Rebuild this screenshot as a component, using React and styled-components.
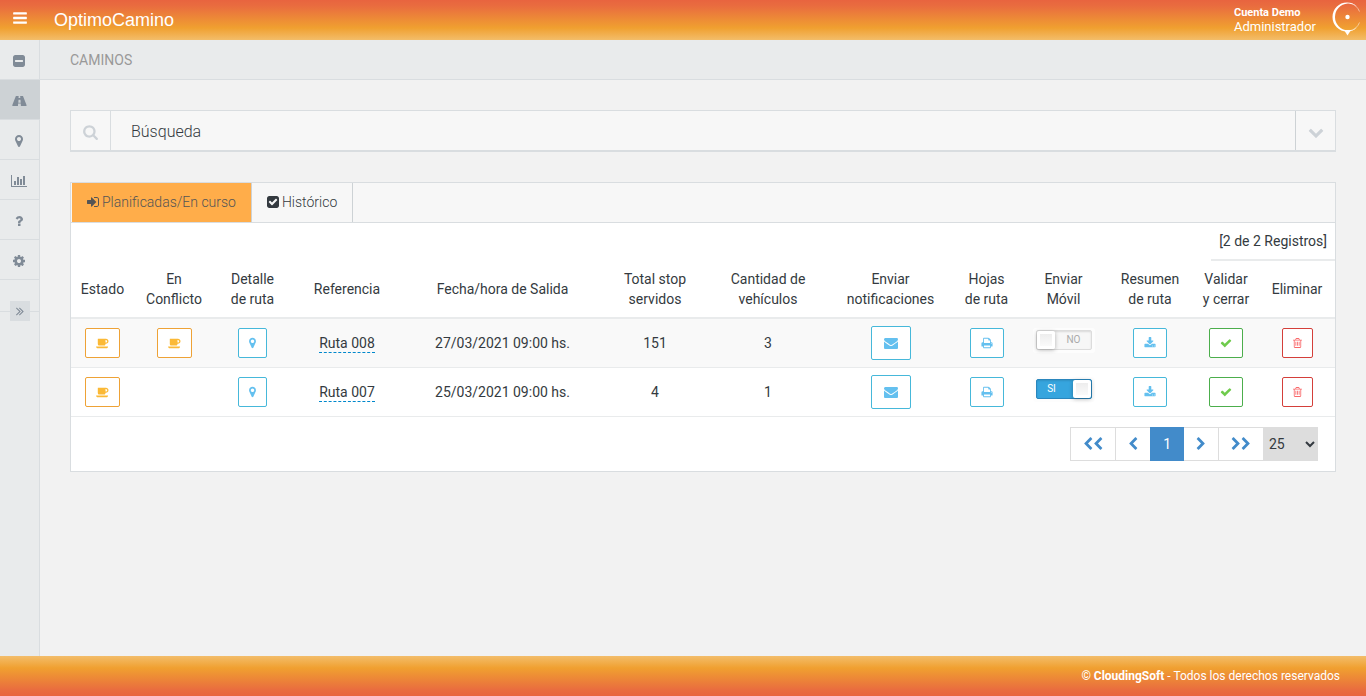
import React from 'react';
import styled, { createGlobalStyle, css } from 'styled-components';

const GlobalStyle = createGlobalStyle`
  *, *::before, *::after { box-sizing: border-box; }
  body {
    margin: 0;
    background: #f2f2f2;
    color: #343a40;
    font: 400 14px/20px Roboto, sans-serif;
  }
  button, select, input { font: inherit; color: inherit; }
  a { color: inherit; text-decoration: none; }
`;

/* Each glyph: [left edge, advance width, path] on a 1792-unit em. */
const GLYPHS = {
  bars: [128, 1536, 'M1664 1344v128q0 26-19 45t-45 19h-1408q-26 0-45-19t-19-45v-128q0-26 19-45t45-19h1408q26 0 45 19t19 45zm0-512v128q0 26-19 45t-45 19h-1408q-26 0-45-19t-19-45v-128q0-26 19-45t45-19h1408q26 0 45 19t19 45zm0-512v128q0 26-19 45t-45 19h-1408q-26 0-45-19t-19-45v-128q0-26 19-45t45-19h1408q26 0 45 19t19 45z'],
  minusSquare: [128, 1536, 'M1408 960v-128q0-26-19-45t-45-19h-896q-26 0-45 19t-19 45v128q0 26 19 45t45 19h896q26 0 45-19t19-45zm256-544v960q0 119-84.5 203.5t-203.5 84.5h-960q-119 0-203.5-84.5t-84.5-203.5v-960q0-119 84.5-203.5t203.5-84.5h960q119 0 203.5 84.5t84.5 203.5z'],
  road: [0, 1920, 'M1111 1086v-4l-24-320q-1-13-11-22.5t-23-9.5h-186q-13 0-23 9.5t-11 22.5l-24 320v4q-1 12 8 20t21 8h244q12 0 21-8t8-20zm749 377q0 73-46 73h-704q13 0 22-9.5t8-22.5l-20-256q-1-13-11-22.5t-23-9.5h-272q-13 0-23 9.5t-11 22.5l-20 256q-1 13 8 22.5t22 9.5h-704q-46 0-46-73 0-54 26-116l417-1044q8-19 26-33t38-14h339q-13 0-23 9.5t-11 22.5l-15 192q-1 14 8 23t22 9h166q13 0 22-9t8-23l-15-192q-1-13-11-22.5t-23-9.5h339q20 0 38 14t26 33l417 1044q26 62 26 116z'],
  marker: [384, 1024, 'M1152 640q0-106-75-181t-181-75-181 75-75 181 75 181 181 75 181-75 75-181zm256 0q0 109-33 179l-364 774q-16 33-47.5 52t-67.5 19-67.5-19-46.5-52l-365-774q-33-70-33-179 0-212 150-362t362-150 362 150 150 362z'],
  chart: [0, 2048, 'M640 896v512h-256v-512h256zm384-512v1024h-256v-1024h256zm1024 1152v128h-2048v-1536h128v1408h1920zm-640-896v768h-256v-768h256zm384-384v1152h-256v-1152h256z'],
  question: [384, 1024, 'M1088 1256v240q0 16-12 28t-28 12h-240q-16 0-28-12t-12-28v-240q0-16 12-28t28-12h240q16 0 28 12t12 28zm316-600q0 54-15.5 101t-35 76.5-55 59.5-57.5 43.5-61 35.5q-41 23-68.5 65t-27.5 67q0 17-12 32.5t-28 15.5h-240q-15 0-25.5-18.5t-10.5-37.5v-45q0-83 65-156.5t143-108.5q59-27 84-56t25-76q0-42-46.5-74t-107.5-32q-65 0-108 29-35 25-107 115-13 16-31 16-12 0-25-8l-164-125q-13-10-15.5-25t5.5-28q160-266 464-266 80 0 161 31t146 83 106 127.5 41 158.5z'],
  cog: [128, 1536, 'M1152 896q0-106-75-181t-181-75-181 75-75 181 75 181 181 75 181-75 75-181zm512-109v222q0 12-8 23t-20 13l-185 28q-19 54-39 91 35 50 107 138 10 12 10 25t-9 23q-27 37-99 108t-94 71q-12 0-26-9l-138-108q-44 23-91 38-16 136-29 186-7 28-36 28h-222q-14 0-24.5-8.5t-11.5-21.5l-28-184q-49-16-90-37l-141 107q-10 9-25 9-14 0-25-11-126-114-165-168-7-10-7-23 0-12 8-23 15-21 51-66.5t54-70.5q-27-50-41-99l-183-27q-13-2-21-12.5t-8-23.5v-222q0-12 8-23t19-13l186-28q14-46 39-92-40-57-107-138-10-12-10-24 0-10 9-23 26-36 98.5-107.5t94.5-71.5q13 0 26 10l138 107q44-23 91-38 16-136 29-186 7-28 36-28h222q14 0 24.5 8.5t11.5 21.5l28 184q49 16 90 37l142-107q9-9 24-9 13 0 25 10 129 119 165 170 7 8 7 22 0 12-8 23-15 21-51 66.5t-54 70.5q26 50 41 98l183 28q13 2 21 12.5t8 23.5z'],
  angles: [387, 1024, 'M979 960q0 13-10 23l-466 466q-10 10-23 10t-23-10l-50-50q-10-10-10-23t10-23l393-393-393-393q-10-10-10-23t10-23l50-50q10-10 23-10t23 10l466 466q10 10 10 23zm384 0q0 13-10 23l-466 466q-10 10-23 10t-23-10l-50-50q-10-10-10-23t10-23l393-393-393-393q-10-10-10-23t10-23l50-50q10-10 23-10t23 10l466 466q10 10 10 23z'],
  search: [64, 1664, 'M1216 832q0-185-131.5-316.5t-316.5-131.5-316.5 131.5-131.5 316.5 131.5 316.5 316.5 131.5 316.5-131.5 131.5-316.5zm512 832q0 52-38 90t-90 38q-54 0-90-38l-343-342q-179 124-399 124-143 0-273.5-55.5t-225-150-150-225-55.5-273.5 55.5-273.5 150-225 225-150 273.5-55.5 273.5 55.5 225 150 150 225 55.5 273.5q0 220-124 399l343 343q37 37 37 90z'],
  down: [0, 1792, 'M1683 808l-742 741q-19 19-45 19t-45-19l-742-741q-19-19-19-45.5t19-45.5l166-165q19-19 45-19t45 19l531 531 531-531q19-19 45-19t45 19l166 165q19 19 19 45.5t-19 45.5z'],
  left: [256, 1280, 'M1427 301l-531 531 531 531q19 19 19 45t-19 45l-166 166q-19 19-45 19t-45-19l-742-742q-19-19-19-45t19-45l742-742q19-19 45-19t45 19l166 166q19 19 19 45t-19 45z'],
  right: [256, 1280, 'M1363 877l-742 742q-19 19-45 19t-45-19l-166-166q-19-19-19-45t19-45l531-531-531-531q-19-19-19-45t19-45l166-166q19-19 45-19t45 19l742 742q19 19 19 45t-19 45z'],
  signIn: [128, 1536, 'M1312 896q0 26-19 45l-544 544q-19 19-45 19t-45-19-19-45v-288h-448q-26 0-45-19t-19-45v-384q0-26 19-45t45-19h448v-288q0-26 19-45t45-19 45 19l544 544q19 19 19 45zm352-352v704q0 119-84.5 203.5t-203.5 84.5h-320q-13 0-22.5-9.5t-9.5-22.5q0-4-1-20t-.5-26.5 3-23.5 10-19.5 20.5-6.5h320q66 0 113-47t47-113v-704q0-66-47-113t-113-47h-312l-11.5-1-11.5-3-8-5.5-7-9-2-13.5q0-4-1-20t-.5-26.5 3-23.5 10-19.5 20.5-6.5h320q119 0 203.5 84.5t84.5 203.5z'],
  checkSquare: [128, 1536, 'M813 1299l614-614q19-19 19-45t-19-45l-102-102q-19-19-45-19t-45 19l-467 467-211-211q-19-19-45-19t-45 19l-102 102q-19 19-19 45t19 45l358 358q19 19 45 19t45-19zm851-883v960q0 119-84.5 203.5t-203.5 84.5h-960q-119 0-203.5-84.5t-84.5-203.5v-960q0-119 84.5-203.5t203.5-84.5h960q119 0 203.5 84.5t84.5 203.5z'],
  coffee: [0, 1920, 'M1664 640q0-80-56-136t-136-56h-64v384h64q80 0 136-56t56-136zm-1664 768h1792q0 106-75 181t-181 75h-1280q-106 0-181-75t-75-181zm1856-768q0 159-112.5 271.5t-271.5 112.5h-64v32q0 92-66 158t-158 66h-704q-92 0-158-66t-66-158v-736q0-26 19-45t45-19h1152q159 0 271.5 112.5t112.5 271.5z'],
  envelope: [0, 1792, 'M1792 710v794q0 66-47 113t-113 47h-1472q-66 0-113-47t-47-113v-794q44 49 101 87 362 246 497 345 57 42 92.5 65.5t94.5 48 110 24.5h2q51 0 110-24.5t94.5-48 92.5-65.5q170-123 498-345 57-39 100-87zm0-294q0 79-49 151t-122 123q-376 261-468 325-10 7-42.5 31t-54 38.5-52 32.5-57.5 27-50 9h-2q-23 0-50-9t-57.5-27-52-32.5-54-38.5-42.5-31q-91-64-262-182.5t-205-142.5q-62-42-117-115.5t-55-136.5q0-78 41.5-130t118.5-52h1472q65 0 112.5 47t47.5 113z'],
  print: [32, 1728, 'M448 1536h896v-256h-896v256zm0-640h896v-384h-160q-40 0-68-28t-28-68v-160h-640v640zm1152 64q0-26-19-45t-45-19-45 19-19 45 19 45 45 19 45-19 19-45zm128 0v416q0 13-9.5 22.5t-22.5 9.5h-224v160q0 40-28 68t-68 28h-960q-40 0-68-28t-28-68v-160h-224q-13 0-22.5-9.5t-9.5-22.5v-416q0-79 56.5-135.5t135.5-56.5h64v-544q0-40 28-68t68-28h672q40 0 88 20t76 48l152 152q28 28 48 76t20 88v256h64q79 0 135.5 56.5t56.5 135.5z'],
  download: [32, 1728, 'M1344 1344q0-26-19-45t-45-19-45 19-19 45 19 45 45 19 45-19 19-45zm256 0q0-26-19-45t-45-19-45 19-19 45 19 45 45 19 45-19 19-45zm128-224v320q0 40-28 68t-68 28h-1472q-40 0-68-28t-28-68v-320q0-40 28-68t68-28h465l135 136q58 56 136 56t136-56l136-136h464q40 0 68 28t28 68zm-325-569q17 41-14 70l-448 448q-18 19-45 19t-45-19l-448-448q-31-29-14-70 17-39 59-39h256v-448q0-26 19-45t45-19h256q26 0 45 19t19 45v448h256q42 0 59 39z'],
  check: [32, 1728, 'M1671 566q0 40-28 68l-724 724-136 136q-28 28-68 28t-68-28l-136-136-362-362q-28-28-28-68t28-68l136-136q28-28 68-28t68 28l294 295 656-657q28-28 68-28t68 28l136 136q28 28 28 68z'],
  trash: [192, 1408, 'M704 736v576q0 14-9 23t-23 9h-64q-14 0-23-9t-9-23v-576q0-14 9-23t23-9h64q14 0 23 9t9 23zm256 0v576q0 14-9 23t-23 9h-64q-14 0-23-9t-9-23v-576q0-14 9-23t23-9h64q14 0 23 9t9 23zm256 0v576q0 14-9 23t-23 9h-64q-14 0-23-9t-9-23v-576q0-14 9-23t23-9h64q14 0 23 9t9 23zm128 724v-948h-896v948q0 22 7 40.5t14.5 27 10.5 8.5h832q3 0 10.5-8.5t14.5-27 7-40.5zm-672-1076h448l-48-117q-7-9-17-11h-317q-10 2-17 11zm928 32v64q0 14-9 23t-23 9h-96v948q0 83-47 143.5t-113 60.5h-832q-66 0-113-58.5t-47-141.5v-952h-96q-14 0-23-9t-9-23v-64q0-14 9-23t23-9h309l70-167q15-37 54-63t79-26h320q40 0 79 26t54 63l70 167h309q14 0 23 9t9 23z'],
};

const Glyph = styled.svg`
  display: block;
  flex: none;
  fill: currentColor;
`;

function Icon({ name, size = 14 }) {
  const [x, w, d] = GLYPHS[name];
  return (
    <Glyph
      viewBox={`${x} 0 ${w} 1792`}
      width={Math.round((w / 1792) * size)}
      height={size}
      aria-hidden="true"
    >
      <path d={d} />
    </Glyph>
  );
}

const Page = styled.div`
  display: flex;
  flex-direction: column;
  min-height: 100vh;
`;

const Header = styled.header`
  display: flex;
  align-items: center;
  height: 40px;
  color: #fff;
  background: linear-gradient(to bottom, #e8643f 0%, #e96c3f 15%, #f0a030 70%, #f3bd6a 100%);
`;

const MenuButton = styled.button`
  display: flex;
  align-items: center;
  justify-content: center;
  width: 40px;
  height: 40px;
  padding: 0 0 4px;
  border: 0;
  background: none;
`;

const Brand = styled.a`
  margin-left: 14px;
  font: 18px/20px "Liberation Sans", sans-serif;
`;

const Account = styled.div`
  margin-left: auto;
  margin-right: 14px;
  font-size: 13px;
  line-height: 14px;

  strong {
    display: block;
    font-size: 11px;
    font-weight: 700;
  }
`;

const Logo = styled.svg`
  display: block;
  width: 30px;
  height: 40px;
  margin-right: 6px;
`;

const Body = styled.div`
  display: flex;
  flex: 1;
`;

const Sidebar = styled.nav`
  flex: none;
  width: 40px;
  background: #e9ebec;
  border-right: 1px solid #d9dde0;
`;

const NavLink = styled.a`
  display: flex;
  align-items: center;
  justify-content: center;
  height: 40px;
  padding: 2px 1px 0 0;
  border-bottom: 1px solid #d9dde0;
  color: #808b97;
  ${(p) => p.$active && css`
    margin-right: -1px;
    padding-right: 2px;
    background: #cdd2d5;
  `}
`;

const Collapse = styled.div`
  display: flex;
  align-items: center;
  justify-content: center;
  margin-top: 21px;
  background: linear-gradient(#d9dde0, #d9dde0) center / 100% 1px no-repeat;
`;

const CollapseButton = styled.button`
  display: flex;
  align-items: center;
  justify-content: center;
  width: 20px;
  height: 20px;
  padding: 0;
  border: 0;
  color: #808b97;
  background: #d9dde0;
`;

const Main = styled.main`
  flex: 1;
  min-width: 0;
`;

const Breadcrumb = styled.h1`
  height: 40px;
  margin: 0;
  padding: 0 30px;
  border-bottom: 1px solid #d9dde0;
  background: #e9ebec;
  color: #999;
  font-size: 14px;
  font-weight: 400;
  line-height: 40px;
`;

const Content = styled.div`
  display: flex;
  flex-direction: column;
  gap: 30px;
  padding: 30px;
`;

const SearchPanel = styled.section`
  display: flex;
  height: 42px;
  border: 1px solid #d9dde0;
  border-bottom-width: 2px;
  background: #f7f7f7;
`;

const SearchIcon = styled.div`
  display: flex;
  align-items: center;
  justify-content: center;
  width: 40px;
  padding-top: 2px;
  border-right: 1px solid #d9dde0;
  color: #cdd2d7;
`;

const SearchTitle = styled.h2`
  flex: 1;
  margin: 0;
  padding-left: 20px;
  font-size: 16px;
  font-weight: 300;
  line-height: 41px;
`;

const ExpandButton = styled.button`
  display: flex;
  align-items: center;
  justify-content: center;
  width: 40px;
  padding: 2px 0 0;
  border: 0;
  border-left: 1px solid #cdd2d5;
  background: none;
  color: #cdd2d7;
`;

const Panel = styled.section`
  border: 1px solid #d9dde0;
  background: #fff;
`;

const Tabs = styled.div`
  display: flex;
  height: 40px;
  padding-left: 1px;
  border-bottom: 1px solid #d9dde0;
  background: #f7f7f7;
`;

const Tab = styled.button`
  display: flex;
  align-items: center;
  gap: 3px;
  padding: 0 15px 2px;
  border: 0;
  border-right: 1px solid #cdd2d5;
  background: ${(p) => (p.$active ? '#ffad4a' : 'none')};
  color: ${(p) => (p.$active ? '#555' : '#343a40')};
  font-weight: 300;
`;

const RecordCount = styled.div`
  width: fit-content;
  margin-left: auto;
  padding: 8px;
  border-bottom: 2px solid #e9ebec;
`;

const Table = styled.table`
  width: 100%;
  table-layout: fixed;
  border-collapse: separate;
  border-spacing: 0;
  text-align: center;
`;

const HeadCell = styled.th`
  width: ${(p) => p.$width}px;
  height: 58px;
  padding: 8px;
  border-bottom: 2px solid #e9ebec;
  font-weight: 400;
`;

const Row = styled.tr`
  background: ${(p) => (p.$striped ? '#f9f9f9' : '#fff')};
`;

const Cell = styled.td`
  height: 49px;
  padding: 0 8px;
  border-bottom: 1px solid #e9ebec;
`;

const TONES = {
  warning: ['#eea236', '#fbb936'],
  info: ['#46b8da', '#64c0ef'],
  success: ['#4cae4c', '#6fcb4c'],
  danger: ['#d43f3a', '#f9686a'],
};

const ActionButton = styled.button`
  display: inline-flex;
  align-items: center;
  justify-content: center;
  height: ${(p) => (p.$large ? 34 : 30)}px;
  padding: 0 ${(p) => (p.$large ? 12 : 10)}px;
  border: 1px solid ${(p) => TONES[p.$tone][0]};
  border-radius: 2px;
  background: #fff;
  color: ${(p) => TONES[p.$tone][1]};
  vertical-align: middle;
`;

const RouteLink = styled.a`
  display: inline-block;
  border-bottom: 1px dashed #0088cc;
  line-height: 18px;
`;

const SwitchLabel = styled.label`
  display: inline-flex;
  vertical-align: middle;
  padding: 2px 3px 3px;
  margin-bottom: 5px;
  border-radius: 3px;
  background: #fdfdfd;
  cursor: pointer;
`;

const SwitchInput = styled.input`
  position: absolute;
  width: 1px;
  height: 1px;
  margin: 0;
  opacity: 0;
`;

const SwitchTrack = styled.span`
  display: flex;
  flex-direction: ${(p) => (p.$on ? 'row' : 'row-reverse')};
  width: 56px;
  height: 20px;
  border: 1px solid ${(p) => (p.$on ? '#2a86bd' : '#dcdcdc')};
  border-radius: 2px;
  background: ${(p) => (p.$on ? '#36a5de' : '#f7f7f7')};
  box-shadow: inset 0 1px 2px rgba(0, 0, 0, 0.12);
  color: ${(p) => (p.$on ? '#fff' : '#aaa')};
  font-size: 10px;
  line-height: 17px;
`;

const SwitchText = styled.span`
  flex: 1;
  padding: ${(p) => (p.$on ? '0 6px 0 0' : '0 0 0 2px')};
`;

const SwitchKnob = styled.span`
  width: 18px;
  height: 18px;
  border: 3px solid #fff;
  border-radius: 2px;
  background: linear-gradient(#ededed, #fafafa);
  box-shadow: 0 1px 4px rgba(0, 0, 0, 0.3);
`;

const Pagination = styled.div`
  display: flex;
  justify-content: flex-end;
  padding: 10px 17px;
`;

const PageButton = styled.button`
  display: flex;
  align-items: center;
  height: 34px;
  padding: 0 12px;
  margin-left: -1px;
  border: 1px solid ${(p) => (p.$active ? '#428bca' : '#ddd')};
  background: ${(p) => (p.$active ? '#428bca' : '#fff')};
  color: ${(p) => (p.$active ? '#fff' : '#428bca')};
  position: relative;
  z-index: ${(p) => (p.$active ? 1 : 0)};
`;

const PageSize = styled.select`
  position: relative;
  width: 55px;
  height: 34px;
  margin-left: -1px;
  padding: 0 2px;
  border: 0;
  border-radius: 0;
  background: #ddd;
`;

const Footer = styled.footer`
  display: flex;
  align-items: center;
  justify-content: flex-end;
  height: 40px;
  padding: 0 26px;
  color: #fff;
  font-size: 12px;
  background: linear-gradient(to top, #e8643f 0%, #e96c3f 15%, #f0a030 70%, #f3bd6a 100%);

  strong { font-weight: 700; }
`;

const NAV = [
  ['minusSquare', 'Panel'],
  ['road', 'Caminos'],
  ['marker', 'Puntos'],
  ['chart', 'Reportes'],
  ['question', 'Ayuda'],
  ['cog', 'Configuración'],
];

const COLUMNS = [
  ['Estado', 63],
  ['En Conflicto', 80],
  ['Detalle de ruta', 77],
  ['Referencia', 112],
  ['Fecha/hora de Salida', 199],
  ['Total stop servidos', 106],
  ['Cantidad de vehículos', 120],
  ['Enviar notificaciones', 125],
  ['Hojas de ruta', 67],
  ['Enviar Móvil', 87],
  ['Resumen de ruta', 86],
  ['Validar y cerrar', 66],
  ['Eliminar', 76],
];

const ROUTES = [
  { name: 'Ruta 008', date: '27/03/2021 09:00 hs.', stops: 151, vehicles: 3, conflict: true, mobile: false },
  { name: 'Ruta 007', date: '25/03/2021 09:00 hs.', stops: 4, vehicles: 1, conflict: false, mobile: true },
];

function Action({ tone, icon, label, large }) {
  return (
    <ActionButton type="button" $tone={tone} $large={large} aria-label={label}>
      <Icon name={icon} size={large ? 14 : 12} />
    </ActionButton>
  );
}

function Switch({ initial, label }) {
  const [on, setOn] = React.useState(initial);
  return (
    <SwitchLabel>
      <SwitchInput
        type="checkbox"
        checked={on}
        onChange={(e) => setOn(e.target.checked)}
        aria-label={label}
      />
      <SwitchTrack $on={on}>
        <SwitchText $on={on}>{on ? 'SI' : 'NO'}</SwitchText>
        <SwitchKnob />
      </SwitchTrack>
    </SwitchLabel>
  );
}

function RouteRow({ route, striped }) {
  return (
    <Row $striped={striped}>
      <Cell><Action tone="warning" icon="coffee" label="Estado" /></Cell>
      <Cell>{route.conflict && <Action tone="warning" icon="coffee" label="En conflicto" />}</Cell>
      <Cell><Action tone="info" icon="marker" label="Detalle de ruta" /></Cell>
      <Cell><RouteLink href="#">{route.name}</RouteLink></Cell>
      <Cell>{route.date}</Cell>
      <Cell>{route.stops}</Cell>
      <Cell>{route.vehicles}</Cell>
      <Cell><Action tone="info" icon="envelope" label="Enviar notificaciones" large /></Cell>
      <Cell><Action tone="info" icon="print" label="Hojas de ruta" /></Cell>
      <Cell><Switch initial={route.mobile} label="Enviar a móvil" /></Cell>
      <Cell><Action tone="info" icon="download" label="Resumen de ruta" /></Cell>
      <Cell><Action tone="success" icon="check" label="Validar y cerrar" /></Cell>
      <Cell><Action tone="danger" icon="trash" label="Eliminar" /></Cell>
    </Row>
  );
}

export default function App() {
  return (
    <Page>
      <GlobalStyle />
      <Header>
        <MenuButton type="button" aria-label="Menú"><Icon name="bars" size={16} /></MenuButton>
        <Brand href="#">OptimoCamino</Brand>
        <Account>
          <strong>Cuenta Demo</strong>
          Administrador
        </Account>
        <Logo viewBox="0 0 30 40" aria-hidden="true">
          <path d="M27.080 6.580A14.500 14.500 0 1 0 27.080 27.420A13.500 13.500 0 1 1 27.080 6.580Z" fill="#fff" />
          <path d="M20 3.200A14 14 0 0 1 29.500 11.500M29.500 22.500A14 14 0 0 1 20 30.800" fill="none" stroke="#fff" strokeOpacity=".5" />
          <circle cx="17.500" cy="17" r="2.200" fill="#fff" />
          <path d="M14 30H21L17.500 35.500Z" fill="#fff" />
        </Logo>
      </Header>
      <Body>
        <Sidebar>
          {NAV.map(([icon, label]) => (
            <NavLink key={icon} href="#" aria-label={label} $active={icon === 'road'}>
              <Icon name={icon} />
            </NavLink>
          ))}
          <Collapse>
            <CollapseButton type="button" aria-label="Expandir menú"><Icon name="angles" /></CollapseButton>
          </Collapse>
        </Sidebar>
        <Main>
          <Breadcrumb>CAMINOS</Breadcrumb>
          <Content>
            <SearchPanel>
              <SearchIcon><Icon name="search" size={16} /></SearchIcon>
              <SearchTitle>Búsqueda</SearchTitle>
              <ExpandButton type="button" aria-label="Desplegar búsqueda"><Icon name="down" size={16} /></ExpandButton>
            </SearchPanel>
            <Panel>
              <Tabs role="tablist">
                <Tab type="button" role="tab" aria-selected="true" $active>
                  <Icon name="signIn" />Planificadas/En curso
                </Tab>
                <Tab type="button" role="tab" aria-selected="false">
                  <Icon name="checkSquare" />Histórico
                </Tab>
              </Tabs>
              <RecordCount>[2 de 2 Registros]</RecordCount>
              <Table>
                <thead>
                  <tr>
                    {COLUMNS.map(([title, width]) => (
                      <HeadCell key={title} scope="col" $width={width}>{title}</HeadCell>
                    ))}
                  </tr>
                </thead>
                <tbody>
                  {ROUTES.map((route, i) => (
                    <RouteRow key={route.name} route={route} striped={i % 2 === 0} />
                  ))}
                </tbody>
              </Table>
              <Pagination>
                <PageButton type="button" aria-label="Primera página"><Icon name="left" /><Icon name="left" /></PageButton>
                <PageButton type="button" aria-label="Página anterior"><Icon name="left" /></PageButton>
                <PageButton type="button" $active>1</PageButton>
                <PageButton type="button" aria-label="Página siguiente"><Icon name="right" /></PageButton>
                <PageButton type="button" aria-label="Última página"><Icon name="right" /><Icon name="right" /></PageButton>
                <PageSize aria-label="Registros por página" defaultValue="25">
                  <option>10</option>
                  <option>25</option>
                  <option>50</option>
                </PageSize>
              </Pagination>
            </Panel>
          </Content>
        </Main>
      </Body>
      <Footer><span>© <strong>CloudingSoft</strong> - Todos los derechos reservados</span></Footer>
    </Page>
  );
}
